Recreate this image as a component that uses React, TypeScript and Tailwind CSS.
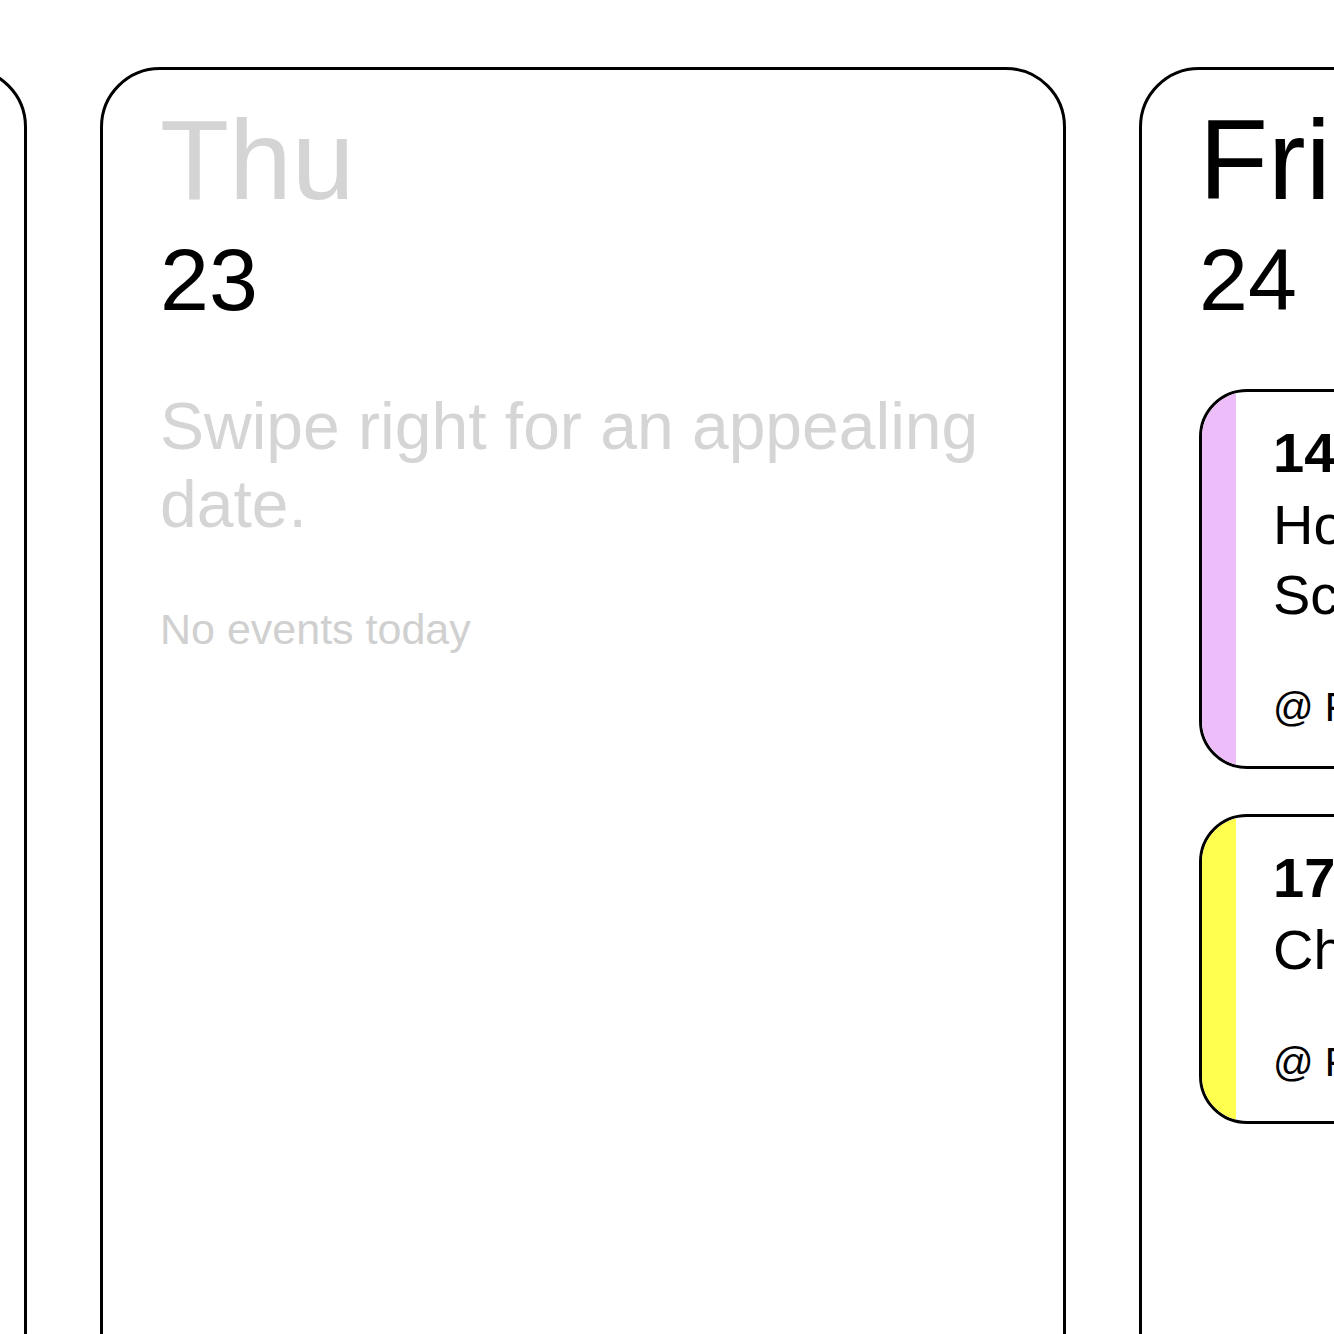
import React from "react";

type Ev = { time: string; title: string; place: string; color: string };

const font = { fontFamily: '"Liberation Sans", Arial, Helvetica, sans-serif' };

function EventCard({ ev }: { ev: Ev }) {
  return (
    <div className="flex border-[3px] border-black rounded-[48px] overflow-hidden bg-white">
      <div className={`w-[34px] shrink-0 ${ev.color}`} />
      <div className="flex flex-col pl-[37px] pr-[40px] pt-[27px] pb-[35px] text-black">
        <div className="text-[56px] leading-[67px] font-bold whitespace-nowrap">{ev.time}</div>
        <div className="mt-[4px] text-[56px] leading-[70px] w-[400px]">{ev.title}</div>
        <div className="mt-[53px] text-[40px] leading-[48px] whitespace-nowrap">{ev.place}</div>
      </div>
    </div>
  );
}

function DayCard({
  day,
  date,
  muted,
  children,
}: {
  day: string;
  date: string;
  muted?: boolean;
  children?: React.ReactNode;
}) {
  return (
    <div className="w-[966px] h-[1400px] shrink-0 border-[3px] border-black rounded-[60px] bg-white pl-[57px] pr-[55px] pt-[34px]">
      <div
        className={`text-[113px] leading-[113px] ${muted ? "text-[#d4d4d4]" : "text-black"}`}
      >
        {day}
      </div>
      <div className="mt-[19px] text-[88px] leading-[88px] text-black">{date}</div>
      {children}
    </div>
  );
}

export default function App() {
  const events: Ev[] = [
    {
      time: "14:00 – 15:30",
      title: "Hockey Scrimmage",
      place: "@ Field House",
      color: "bg-[#ecbdf9]",
    },
    {
      time: "17:00 – 18:00",
      title: "Chess Club",
      place: "@ Foyer",
      color: "bg-[#ffff4f]",
    },
  ];

  return (
    <div className="w-[1334px] h-[1334px] overflow-hidden bg-white" style={font}>
      <div className="flex gap-[73px] pt-[67px] ml-[-939px]">
        <div className="w-[966px] h-[1400px] shrink-0 border-[3px] border-black rounded-[60px] bg-white" />
        <DayCard day="Thu" date="23" muted>
          <div className="mt-[63px] text-[66px] leading-[78px] text-[#d5d5d5]">
            Swipe right for an appealing date.
          </div>
          <div className="mt-[60px] text-[43px] leading-[52px] text-[#d0d0d0]">
            No events today
          </div>
        </DayCard>
        <DayCard day="Fri" date="24">
          <div className="mt-[65px] flex flex-col gap-[45px]">
            {events.map((e) => (
              <EventCard key={e.time} ev={e} />
            ))}
          </div>
        </DayCard>
      </div>
    </div>
  );
}
